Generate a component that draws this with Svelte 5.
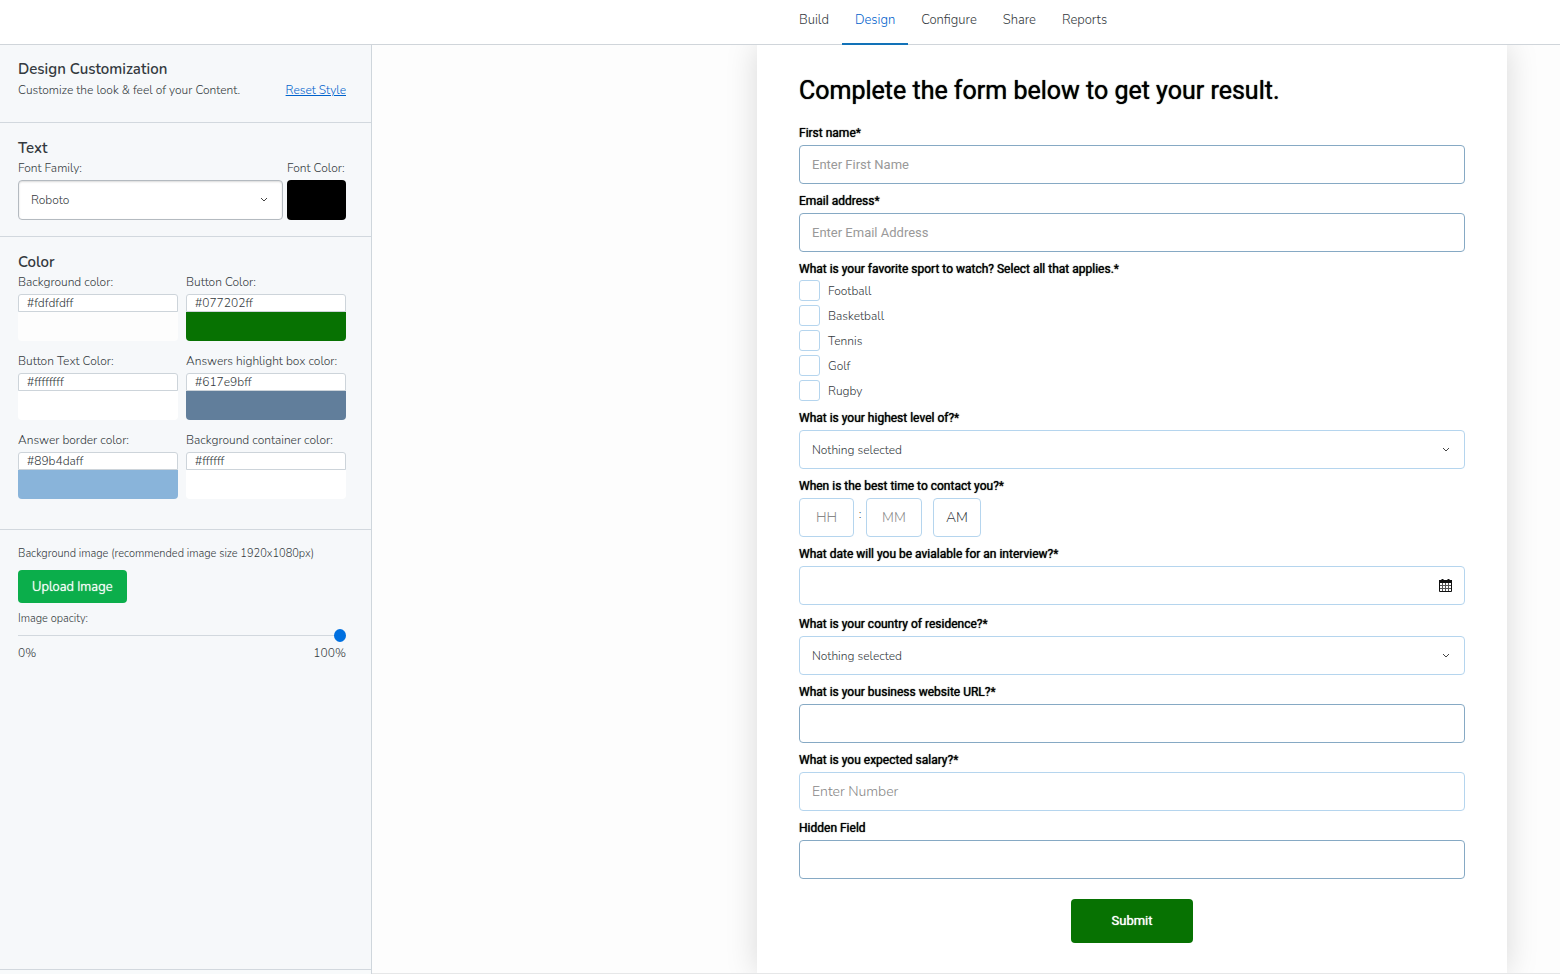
<script>
    const tabs = ['Build', 'Design', 'Configure', 'Share', 'Reports'];
    let activeTab = 'Design';

    let fontFamily = 'Roboto';
    let opacity = 100;

    let colors = [
        { id: 'background', label: 'Background color:', value: '#fdfdfdff' },
        { id: 'button', label: 'Button Color:', value: '#077202ff' },
        { id: 'button-text', label: 'Button Text Color:', value: '#ffffffff' },
        { id: 'highlight', label: 'Answers highlight box color:', value: '#617e9bff' },
        { id: 'border', label: 'Answer border color:', value: '#89b4daff' },
        { id: 'container', label: 'Background container color:', value: '#ffffff' }
    ];

    const sports = ['Football', 'Basketball', 'Tennis', 'Golf', 'Rugby'];

    const setColor = (color, hex) => {
        color.value = hex;
        colors = colors;
    };
</script>

<div class="page">
    <header>
        <nav>
            {#each tabs as tab}
                <a href="#{tab.toLowerCase()}" class:active={tab === activeTab} on:click|preventDefault={() => (activeTab = tab)}>{tab}</a>
            {/each}
        </nav>
    </header>

    <div class="body">
        <aside>
            <section class="intro">
                <h2>Design Customization</h2>
                <div class="row">
                    <p>Customize the look &amp; feel of your Content.</p>
                    <a class="reset" href="#reset">Reset Style</a>
                </div>
            </section>

            <section class="text">
                <h2>Text</h2>
                <div class="font-row">
                    <div>
                        <label for="font-family">Font Family:</label>
                        <div class="select">
                            <select id="font-family" class="shaded" bind:value={fontFamily}>
                                <option>Roboto</option>
                                <option>Lato</option>
                                <option>Open Sans</option>
                            </select>
                            <svg viewBox="0 0 8 6"><path d="M1 1l3 3 3-3" /></svg>
                        </div>
                    </div>
                    <div>
                        <label for="font-color">Font Color:</label>
                        <input id="font-color" class="font-color" type="color" value="#000000" />
                    </div>
                </div>
            </section>

            <section class="colors">
                <h2>Color</h2>
                <div class="color-grid">
                    {#each colors as color}
                        <div>
                            <label for={color.id}>{color.label}</label>
                            <input id={color.id} class="hex" type="text" bind:value={color.value} />
                            <input
                                class="swatch"
                                type="color"
                                aria-label={color.label}
                                value={color.value.slice(0, 7)}
                                on:input={(e) => setColor(color, e.target.value)}
                            />
                        </div>
                    {/each}
                </div>
            </section>

            <section class="image">
                <p class="small">Background image (recommended image size 1920x1080px)</p>
                <button class="upload" type="button">Upload Image</button>
                <label class="small" for="opacity">Image opacity:</label>
                <input id="opacity" type="range" min="0" max="100" bind:value={opacity} />
                <div class="row">
                    <span>0%</span>
                    <span>100%</span>
                </div>
            </section>

            <div class="aside-foot"></div>
        </aside>

        <main>
            <form on:submit|preventDefault>
                <h1>Complete the form below to get your result.</h1>

                <div class="field">
                    <label for="first-name">First name*</label>
                    <input id="first-name" class="strong" type="text" placeholder="Enter First Name" />
                </div>

                <div class="field">
                    <label for="email">Email address*</label>
                    <input id="email" class="strong" type="email" placeholder="Enter Email Address" />
                </div>

                <fieldset class="field">
                    <legend>What is your favorite sport to watch? Select all that applies.*</legend>
                    <div class="checks">
                        {#each sports as sport}
                            <label><input type="checkbox" value={sport} />{sport}</label>
                        {/each}
                    </div>
                </fieldset>

                <div class="field">
                    <label for="level">What is your highest level of?*</label>
                    <div class="select">
                        <select id="level"><option>Nothing selected</option></select>
                        <svg viewBox="0 0 8 6"><path d="M1 1l3 3 3-3" /></svg>
                    </div>
                </div>

                <div class="field">
                    <label for="hours">When is the best time to contact you?*</label>
                    <div class="time">
                        <input id="hours" type="text" placeholder="HH" />
                        <span>:</span>
                        <input type="text" placeholder="MM" aria-label="Minutes" />
                        <select aria-label="AM or PM">
                            <option>AM</option>
                            <option>PM</option>
                        </select>
                    </div>
                </div>

                <div class="field date-field">
                    <label for="date">What date will you be avialable for an interview?*</label>
                    <div class="date">
                        <input id="date" type="text" />
                        <button type="button" aria-label="Open calendar">
                            <svg viewBox="0 0 13 14">
                                <path class="frame" d="M.5 2.5h12v10H.5z" />
                                <path class="bar" d="M0 1h13v3H0z" />
                                <path class="rings" d="M3.5 0v2.5M9.5 0v2.5" />
                                <path class="lines" d="M1 6.5h11M1 9.5h11M3.5 4v8M6.5 4v8M9.5 4v8" />
                            </svg>
                        </button>
                    </div>
                </div>

                <div class="field">
                    <label for="country">What is your country of residence?*</label>
                    <div class="select">
                        <select id="country"><option>Nothing selected</option></select>
                        <svg viewBox="0 0 8 6"><path d="M1 1l3 3 3-3" /></svg>
                    </div>
                </div>

                <div class="field">
                    <label for="website">What is your business website URL?*</label>
                    <input id="website" class="strong" type="url" />
                </div>

                <div class="field">
                    <label for="salary">What is you expected salary?*</label>
                    <input id="salary" type="text" inputmode="numeric" placeholder="Enter Number" />
                </div>

                <div class="field">
                    <label for="hidden-field">Hidden Field</label>
                    <input id="hidden-field" class="strong" type="text" />
                </div>

                <button class="submit" type="submit">Submit</button>
            </form>
        </main>
    </div>
</div>

<style>
    :global(body) {
        margin: 0;
    }

    .page {
        display: flex;
        flex-direction: column;
        min-height: 100vh;
        background: #fff;
        color: #343a40;
        font: 300 12px/18px Nunito, Lato, sans-serif;
    }

    .page :global(*) {
        box-sizing: border-box;
    }

    h1,
    h2,
    p {
        margin: 0;
    }

    input,
    select,
    button {
        margin: 0;
        font-family: inherit;
        font-weight: inherit;
    }

    /* Top navigation */
    header {
        position: relative;
        z-index: 1;
        border-bottom: 1px solid #d0d5da;
        background: #fff;
    }

    nav {
        display: flex;
        height: 44px;
        padding-left: 786px;
    }

    nav a {
        height: 45px;
        padding: 11px 13px 0;
        border-bottom: 2px solid transparent;
        color: #343a40;
        font-size: 13px;
        text-decoration: none;
    }

    nav a.active {
        border-color: #1272b8;
        color: #0062cc;
    }

    .body {
        display: flex;
        flex: 1;
    }

    /* Sidebar */
    aside {
        display: flex;
        flex: 0 0 372px;
        flex-direction: column;
        border-right: 1px solid #cfd6dc;
        background: #f6f8fa;
    }

    section {
        padding: 16px 25px 16px 18px;
        border-bottom: 1px solid #d2d8de;
    }

    .intro {
        padding: 15px 25px 23px 18px;
    }

    .intro .row {
        padding-top: 1px;
    }

    .colors {
        padding-bottom: 30px;
    }

    .image {
        flex: 1;
        padding-top: 15px;
        border-bottom: 0;
    }

    h2 {
        padding-bottom: 2px;
        color: #343a40;
        font-size: 15px;
        font-weight: 600;
        line-height: 18px;
    }

    label {
        display: block;
        padding-bottom: 3px;
    }

    .row {
        display: flex;
        justify-content: space-between;
    }

    .reset {
        color: #0062cc;
    }

    .font-row {
        display: grid;
        grid-template-columns: 1fr 59px;
        gap: 4px;
    }

    .select {
        display: grid;
        grid-template-columns: 1fr 38px;
        align-items: center;
    }

    .select select {
        grid-area: 1 / 1 / 2 / 3;
    }

    .select svg {
        grid-area: 1 / 2;
        justify-self: center;
        width: 8px;
        height: 6px;
        fill: none;
        stroke: #444;
        pointer-events: none;
    }

    select {
        width: 100%;
        height: 39px;
        padding: 0 12px;
        appearance: none;
        border: 1px solid #b5d5ee;
        border-radius: 4px;
        background: #fff;
        color: #343a40;
        font-size: 12px;
    }

    select.shaded {
        height: 40px;
        border-color: #b4bac0;
        box-shadow: inset 0 1px 2px rgba(0, 0, 0, 0.15);
    }

    input[type='color'] {
        display: block;
        width: 100%;
        padding: 0;
        appearance: none;
        border: 0;
        background: none;
    }

    input[type='color']::-webkit-color-swatch-wrapper {
        padding: 0;
    }

    input[type='color']::-webkit-color-swatch {
        border: 0;
        border-radius: 0 0 4px 4px;
    }

    .font-color {
        height: 40px;
    }

    input.font-color::-webkit-color-swatch {
        border-radius: 4px;
    }

    .color-grid {
        display: grid;
        grid-template-columns: 1fr 1fr;
        gap: 11px 8px;
    }

    .hex {
        display: block;
        width: 100%;
        height: 18px;
        padding: 0 8px;
        border: 1px solid #cdd4da;
        border-radius: 3px 3px 0 0;
        background: #fff;
        color: #343a40;
        font-size: 12px;
    }

    .swatch {
        height: 29px;
    }

    .small {
        font-size: 11px;
    }

    .image label {
        padding-bottom: 1px;
    }

    .upload {
        display: block;
        height: 33px;
        margin: 7px 0;
        padding: 0 14px;
        border: 0;
        border-radius: 4px;
        background: #0bae4b;
        color: #fff;
        font-size: 13px;
        font-weight: 300;
        text-shadow: 0 0 1px #fff;
    }

    input[type='range'] {
        display: block;
        width: 100%;
        height: 13px;
        margin-bottom: 2px;
        appearance: none;
        background: linear-gradient(#d2d8de, #d2d8de) center / 100% 1px no-repeat;
    }

    input[type='range']::-webkit-slider-thumb {
        width: 12px;
        height: 13px;
        appearance: none;
        border-radius: 50%;
        background: #0070e0;
    }

    .aside-foot {
        height: 5px;
        border-top: 1px solid #d2d8de;
        background: #f8fafb;
    }

    /* Form preview */
    main {
        display: flex;
        flex: 1;
        justify-content: flex-end;
        overflow: hidden;
        padding-right: 53px;
        border-bottom: 1px solid #e6e7e8;
        background: #fdfdfd;
    }

    form {
        display: flex;
        flex: 0 1 750px;
        flex-direction: column;
        gap: 8px;
        padding: 31px 42px 30px;
        background: #fff;
        box-shadow: 0 0 30px rgba(0, 0, 0, 0.15);
    }

    h1 {
        margin-bottom: 10px;
        color: #000;
        font: 400 25px/30px Roboto, sans-serif;
        text-shadow: 0 0 1px #000;
    }

    .field > label,
    legend {
        padding: 0 0 3px;
        color: #000;
        font: 400 12px/18px Roboto, sans-serif;
        text-shadow: 0 0 1px #000;
    }

    fieldset {
        margin: 0;
        padding: 0;
        border: 0;
    }

    legend {
        padding-bottom: 2px;
    }

    .field input:not([type='checkbox']) {
        display: block;
        width: 100%;
        height: 39px;
        padding: 0 12px;
        border: 1px solid #b5d5ee;
        border-radius: 4px;
        background: #fff;
        color: #343a40;
        font-size: 14px;
    }

    .field input.strong:not([type='checkbox']) {
        border-color: #86a9c4;
        font-family: Roboto, sans-serif;
        font-size: 13px;
        font-weight: 400;
    }

    input::placeholder {
        color: #888;
    }

    input.strong::placeholder {
        color: #999;
    }

    .checks {
        display: grid;
        gap: 4px;
    }

    .checks label {
        display: flex;
        align-items: center;
        gap: 8px;
        padding: 0;
    }

    .checks input {
        width: 21px;
        height: 21px;
        appearance: none;
        border: 1px solid #b5d5ee;
        border-radius: 3px;
        background: #fff;
    }

    .checks input:checked {
        background: #617e9b;
    }

    .time {
        display: grid;
        grid-template-columns: 55px 12px 56px 59px;
    }

    .time span {
        padding-top: 7px;
        text-align: center;
    }

    .time input {
        text-align: center;
    }

    .time select {
        width: auto;
        margin-left: 11px;
        padding: 0;
        font-size: 14px;
        text-align-last: center;
    }

    .date-field {
        margin-bottom: 2px;
    }

    .date {
        display: grid;
        grid-template-columns: 1fr 39px;
        align-items: center;
    }

    .date input {
        grid-area: 1 / 1 / 2 / 3;
    }

    .date button {
        z-index: 1;
        grid-area: 1 / 2;
        display: flex;
        justify-content: center;
        padding: 0;
        border: 0;
        background: none;
    }

    .date svg {
        width: 13px;
        height: 14px;
        fill: none;
        stroke: #111;
    }

    .date .bar {
        fill: #111;
        stroke: none;
    }

    .date .rings {
        stroke-width: 2;
    }

    .date .lines {
        stroke: #555;
    }

    .submit {
        align-self: center;
        width: 122px;
        height: 44px;
        margin-top: 12px;
        border: 0;
        border-radius: 4px;
        background: #077202;
        color: #fff;
        font: 400 13px/18px Roboto, sans-serif;
        text-shadow: 0 0 1px #fff;
    }
</style>
